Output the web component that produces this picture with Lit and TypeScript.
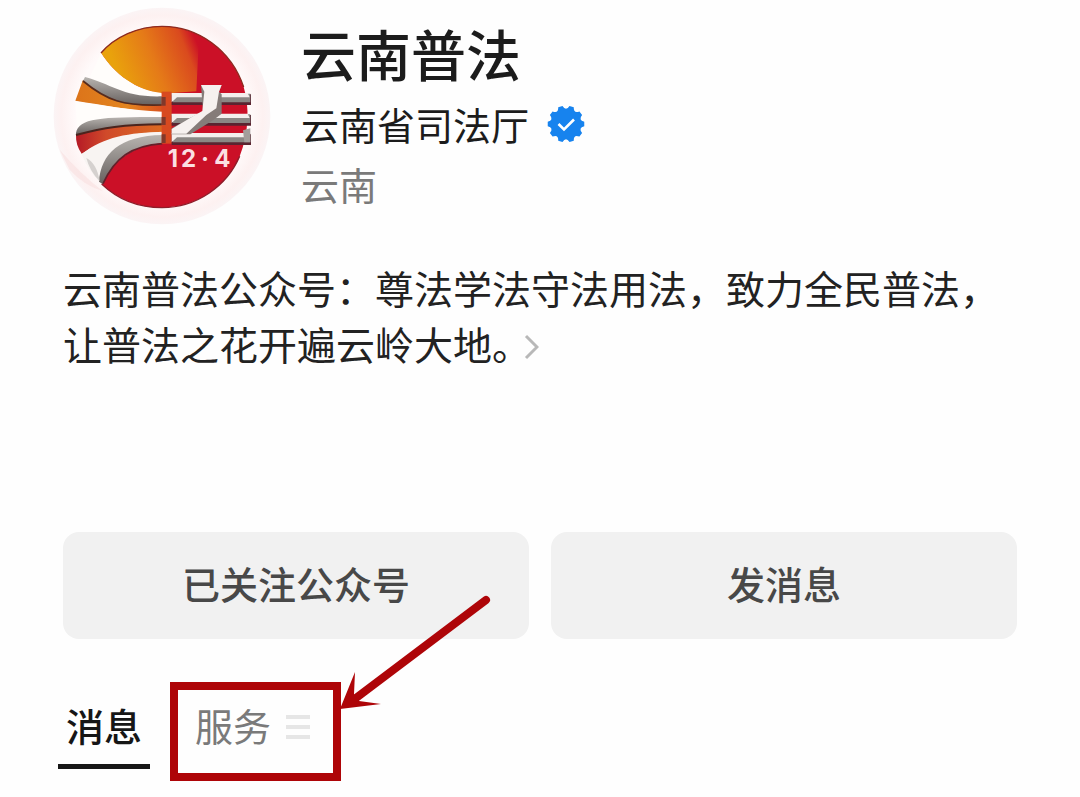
import { LitElement, html, css, svg } from "lit";
import { customElement, state } from "lit/decorators.js";

@customElement("account-logo")
export class AccountLogo extends LitElement {
  static styles = css`
    :host { display: block; }
    .logo { display: block; width: 100%; height: auto; }
    .date { font: 700 72px Inter, sans-serif; fill: #fbdfe2; }
  `;

  // One horizontal bar of the emblem: dark shadow, grey body, white top face.
  private bar(y: number) {
    return svg`
      <path d="M396 ${y + 4}H634V${y + 36}H396Z" fill="#5a2430"/>
      <path d="M396 ${y + 2}H632V${y + 28}H400Z" fill="#8b8784"/>
      <path d="M396 ${y}H624L630 ${y + 13}H412L396 ${y + 28}Z" fill="#f4efed"/>`;
  }

  render() {
    return html`
      <svg class="logo" viewBox="40 22 654 654" role="img" aria-label="云南普法">
        <defs>
          <radialGradient id="halo" cx="50%" cy="50%" r="50%">
            <stop offset="0.8" stop-color="#fffafa"/>
            <stop offset="0.93" stop-color="#fdf1f1"/>
            <stop offset="1" stop-color="#fbf4f5"/>
          </radialGradient>
          <linearGradient id="sun" gradientUnits="userSpaceOnUse" x1="245" y1="245" x2="480" y2="150">
            <stop offset="0" stop-color="#e9a20c"/>
            <stop offset="0.45" stop-color="#e57a18"/>
            <stop offset="0.85" stop-color="#da4a1e"/>
            <stop offset="1" stop-color="#cc1126"/>
          </linearGradient>
          <linearGradient id="ray" x1="0" y1="0" x2="1" y2="0">
            <stop offset="0" stop-color="#dc741a"/>
            <stop offset="0.6" stop-color="#e3851f"/>
            <stop offset="1" stop-color="#d9511d"/>
          </linearGradient>
          <linearGradient id="ray-low" x1="0" y1="0" x2="1" y2="0">
            <stop offset="0" stop-color="#b51a26"/>
            <stop offset="0.35" stop-color="#d04a2a"/>
            <stop offset="1" stop-color="#dc6a22"/>
          </linearGradient>
          <linearGradient id="steel" x1="0" y1="0" x2="0" y2="1">
            <stop offset="0" stop-color="#b8b4b0"/>
            <stop offset="1" stop-color="#66605e"/>
          </linearGradient>
        </defs>

        <circle cx="367" cy="349" r="325" fill="url(#halo)"/>
        <path d="M60 450Q120 520 190 575Q130 555 90 510Z" fill="#f9dfe0" opacity="0.6"/>

        <path d="M184 160C225 112 295 80 367 80C475 80 575 150 612 262C630 320 628 400 600 470C562 560 470 624 367 624C300 624 235 600 186 553C220 485 275 440 366 428V280C290 272 225 225 184 160Z" fill="#cb1027"/>
        <path d="M184 160C225 112 295 80 367 80C420 80 455 96 478 112L470 275L366 282C290 272 225 225 184 160Z" fill="url(#sun)"/>
        <path d="M184 160C225 112 295 80 367 80C475 80 575 150 612 262" fill="none" stroke="#8d2a20" stroke-width="4"/>
        <path d="M600 470C562 560 470 624 367 624C300 624 235 600 186 553" fill="none" stroke="#8f1d2a" stroke-width="4"/>

        <path d="M184 160C225 225 290 272 366 280V305C290 306 235 292 150 232Z" fill="#fffdfb"/>
        <path d="M130 240C200 305 270 314 368 312V343C270 330 190 316 107 303Z" fill="url(#ray)"/>
        <path d="M136 232C215 252 250 294 368 290V316C250 322 200 302 130 244Z" fill="url(#steel)"/>
        <path d="M130 244C200 302 250 320 368 316" fill="none" stroke="#582b1c" stroke-width="5"/>

        <path d="M107 305C190 318 270 332 368 336V352C260 345 180 355 112 385Z" fill="#fffdfb"/>
        <path d="M109 405C180 385 270 368 368 368V396C270 400 190 420 126 462C114 445 108 425 109 405Z" fill="url(#ray-low)"/>
        <path d="M109 400C118 355 180 352 368 352V374C250 374 190 385 109 406Z" fill="url(#steel)"/>
        <path d="M109 406C190 385 250 374 368 374" fill="none" stroke="#4a241e" stroke-width="6"/>

        <path d="M126 464C190 412 270 398 368 398V418C260 420 205 465 180 548Q145 510 126 464Z" fill="#f8f4f2"/>
        <path d="M178 546C184 462 240 408 368 406V430C275 440 225 475 190 554Z" fill="url(#steel)"/>
        <path d="M190 552C225 475 275 438 368 432" fill="none" stroke="#64202a" stroke-width="5"/>
        <path d="M140 475Q172 492 180 545Q150 515 140 475Z" fill="#d5d1cf"/>

        <path d="M366 276H396V432H366Z" fill="#d84a20"/>
        <path d="M366 292H378V318H366ZM366 352H378V376H366ZM366 404H378V430H366Z" fill="#81382a"/>
        ${this.bar(280)}
        ${this.bar(342)}
        ${this.bar(400)}
        <path d="M484 256H546L538 276L546 284V342L520 362L452 404H396V386L452 354L490 336Z" fill="#857c79"/>
        <path d="M484 256H546L538 276L530 326L500 346L440 402H396V388L460 350L488 334L494 276Z" fill="#f6f1ef"/>
        <path d="M610 392L632 386V428H614Z" fill="#a39e9b"/>

        <text class="date" y="502"><tspan x="384">1</tspan><tspan x="424">2</tspan><tspan x="484">·</tspan><tspan x="524">4</tspan></text>
      </svg>`;
  }
}

// Outline of the verified badge: ten flat-tipped teeth joined by curved notches.
function badgePath(center: number, tip: number, notch: number): string {
  const at = (deg: number, r: number) => {
    const a = ((deg - 90) * Math.PI) / 180;
    return `${(center + r * Math.cos(a)).toFixed(2)} ${(center + r * Math.sin(a)).toFixed(2)}`;
  };
  let d = "";
  for (let i = 0; i < 10; i++) {
    const mid = 18 + i * 36;
    d += `${i ? "L" : "M"}${at(mid - 7, tip)}L${at(mid + 7, tip)}Q${at(mid + 18, notch)} ${at(mid + 29, tip)}`;
  }
  return d + "Z";
}

@customElement("app-root")
export class AppRoot extends LitElement {
  @state() private tab = "messages";

  static styles = css`
    :host {
      display: block;
      min-height: 100vh;
      box-sizing: border-box;
      padding: 7px 63px 0;
      background: #fefefe;
      color: #1c1c1c;
      font-family: "Noto Sans CJK SC", sans-serif;
      overflow: hidden;
    }
    .header { display: flex; align-items: flex-start; margin-left: -10px; gap: 30px; }
    .avatar { width: 218px; flex: none; }
    .names { padding-top: 12px; flex: 1; }
    .title { margin: 0; font-size: 55px; line-height: 66px; font-weight: 500; }
    .org { display: flex; align-items: center; gap: 18px; margin: 9px 0 0; font-size: 38px; line-height: 60px; }
    .badge { width: 38px; height: 38px; flex: none; }
    .region { margin: 0; font-size: 38px; line-height: 60px; color: #7a7a7a; }
    .intro { display: block; margin-top: 34px; font-size: 39px; line-height: 56px; color: #222; text-decoration: none; }
    .more { width: 16px; height: 26px; margin-left: -8px; vertical-align: 0; }
    .actions { display: grid; grid-template-columns: 1fr 1fr; gap: 22px; margin-top: 161px; }
    button { font-family: inherit; border: 0; padding: 0; cursor: pointer; }
    .action { height: 107px; padding-bottom: 6px; border-radius: 16px; background: #f1f1f1; color: #484848; font-size: 38px; font-weight: 500; line-height: 56px; }
    .tabs { display: flex; align-items: flex-start; gap: 37px; margin: 60px 0 0 -5px; }
    .tab { position: relative; display: flex; align-items: center; gap: 14px; height: 70px; padding: 0 8px 13px; background: none; border-bottom: 5px solid transparent; color: #7a7a7a; font-size: 38px; line-height: 56px; }
    .tab.active { color: #161616; font-weight: 500; border-bottom-color: #161616; }
    .lines { width: 26px; height: 26px; margin-top: 4px; }
    .mark { position: absolute; left: -17px; top: -17px; width: 171px; height: 99px; box-sizing: border-box; border: 8px solid #ae0508; pointer-events: none; }
    .arrow { position: absolute; left: 153px; top: -107px; width: 155px; height: 120px; pointer-events: none; }
  `;

  render() {
    return html`
      <header class="header">
        <account-logo class="avatar"></account-logo>
        <div class="names">
          <h1 class="title">云南普法</h1>
          <p class="org">
            <span>云南省司法厅</span>
            <svg class="badge" viewBox="0 0 38 38" aria-label="已认证">
              <path d=${badgePath(19, 18.4, 12.6)} fill="#1783ee"/>
              <path d="M11.500 19L17 24.500L27 14.500" fill="none" stroke="#fff" stroke-width="2.600"/>
            </svg>
          </p>
          <p class="region">云南</p>
        </div>
      </header>

      <a class="intro" href="#intro">云南普法公众号：尊法学法守法用法，致力全民普法，让普法之花开遍云岭大地。<svg class="more" viewBox="0 0 16 26" aria-hidden="true"><path d="M3 2L14 13L3 24" fill="none" stroke="#b8b8b8" stroke-width="3"/></svg></a>

      <div class="actions">
        <button class="action" type="button">已关注公众号</button>
        <button class="action" type="button">发消息</button>
      </div>

      <nav class="tabs">
        <button class="tab ${this.tab === "messages" ? "active" : ""}" type="button" @click=${() => (this.tab = "messages")}>消息</button>
        <button class="tab ${this.tab === "services" ? "active" : ""}" type="button" @click=${() => (this.tab = "services")}>
          <span>服务</span>
          <svg class="lines" viewBox="0 0 26 26" aria-hidden="true">
            <path d="M1 3H25M1 13H25M1 23H25" stroke="#e6e6e6" stroke-width="4"/>
          </svg>
          <span class="mark"></span>
          <svg class="arrow" viewBox="0 0 155 120" aria-hidden="true">
            <path d="M146 8L16 106" stroke="#ae0508" stroke-width="8" stroke-linecap="round"/>
            <path d="M0 117L15 80L14 102L19 109L41 112Z" fill="#ae0508"/>
          </svg>
        </button>
      </nav>`;
  }
}
